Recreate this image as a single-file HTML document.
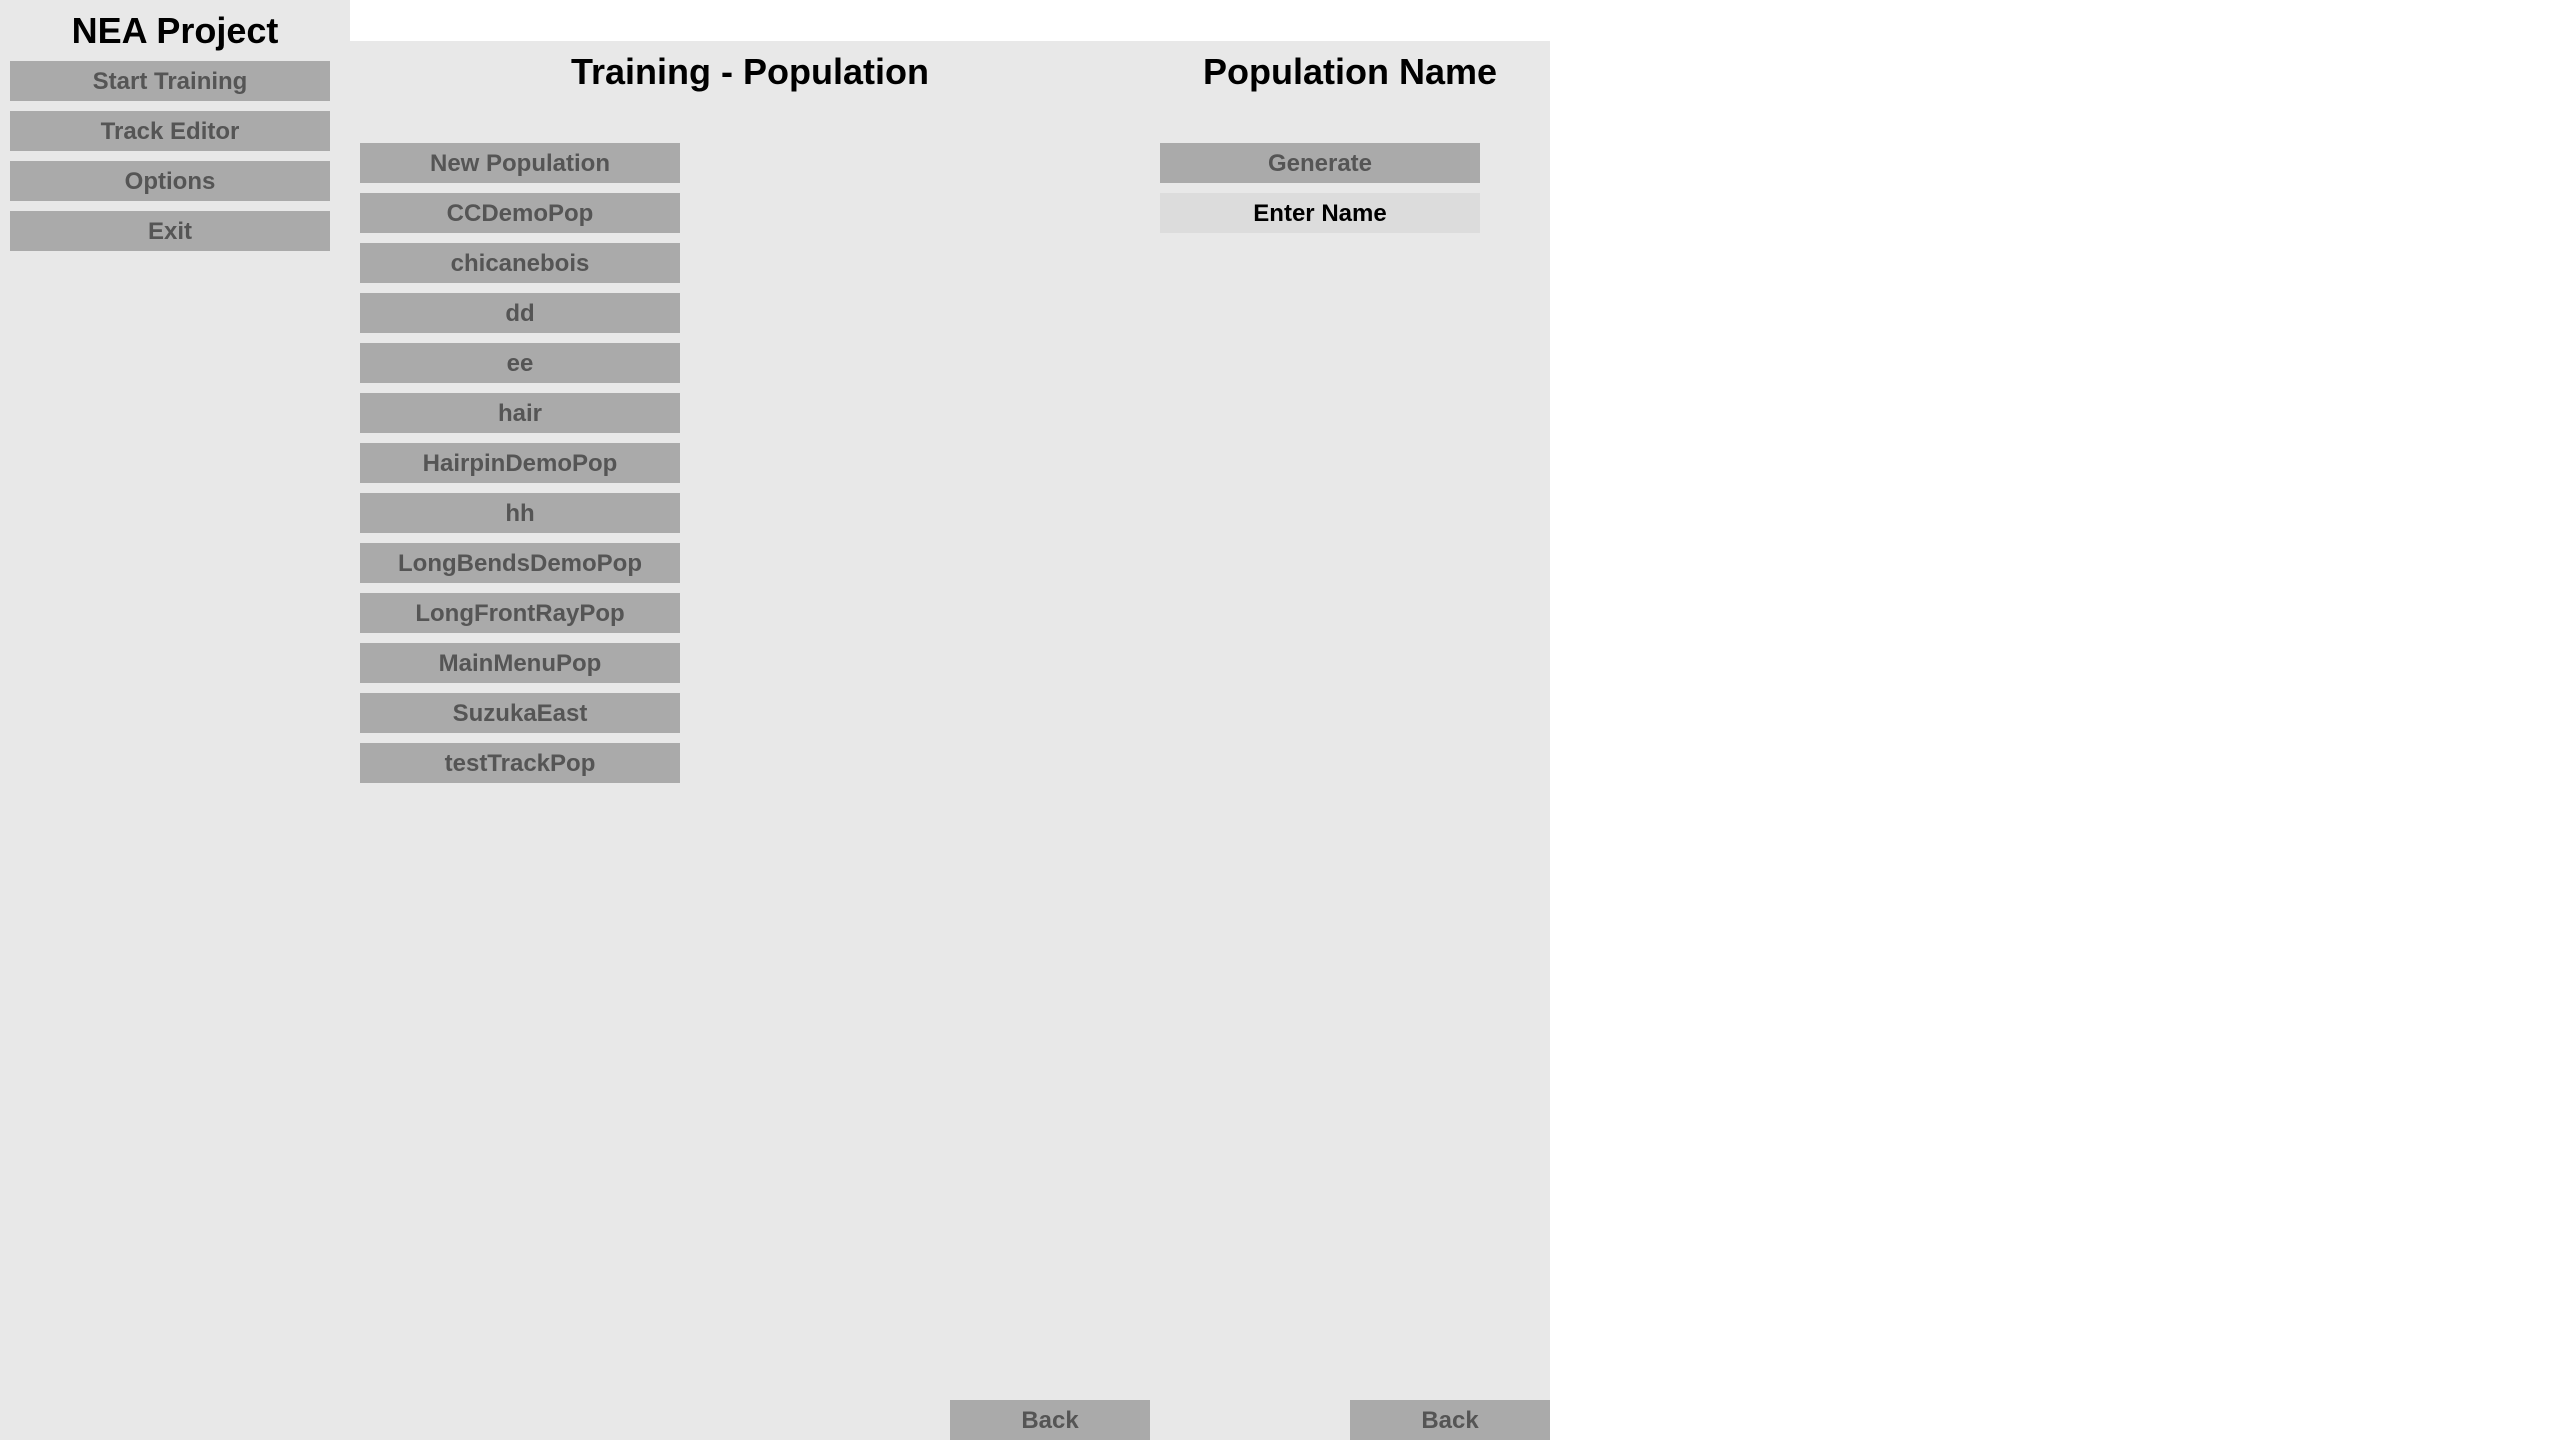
<!DOCTYPE html>
<html><head><meta charset="utf-8"><style>
body{margin:0;width:2560px;height:1440px;background:#fff;position:relative;overflow:hidden;font-family:"Liberation Sans",Arial,sans-serif;}
.sb{position:absolute;left:0;top:0;width:350px;height:1440px;background:#e8e8e8;}
.pn{position:absolute;left:349px;top:41px;width:1201px;height:1399px;background:#e8e8e8;}
.t{position:absolute;font-weight:bold;font-size:36px;color:#000;text-align:center;white-space:nowrap;transform:translateX(-50%);}
.b{position:absolute;width:320px;height:40px;background:#aaaaaa;color:#555;font-weight:bold;font-size:24px;line-height:42px;text-align:center;overflow:hidden;}
</style></head><body>
<div class="sb"></div><div class="pn"></div>
<div class="t" style="left:175px;top:10px">NEA Project</div>
<div class="b" style="left:10px;top:61px">Start Training</div>
<div class="b" style="left:10px;top:111px">Track Editor</div>
<div class="b" style="left:10px;top:161px">Options</div>
<div class="b" style="left:10px;top:211px">Exit</div>
<div class="t" style="left:750px;top:51px">Training - Population</div>
<div class="t" style="left:1350px;top:51px">Population Name</div>
<div class="b" style="left:360px;top:143px">New Population</div>
<div class="b" style="left:360px;top:193px">CCDemoPop</div>
<div class="b" style="left:360px;top:243px">chicanebois</div>
<div class="b" style="left:360px;top:293px">dd</div>
<div class="b" style="left:360px;top:343px">ee</div>
<div class="b" style="left:360px;top:393px">hair</div>
<div class="b" style="left:360px;top:443px">HairpinDemoPop</div>
<div class="b" style="left:360px;top:493px">hh</div>
<div class="b" style="left:360px;top:543px">LongBendsDemoPop</div>
<div class="b" style="left:360px;top:593px">LongFrontRayPop</div>
<div class="b" style="left:360px;top:643px">MainMenuPop</div>
<div class="b" style="left:360px;top:693px">SuzukaEast</div>
<div class="b" style="left:360px;top:743px">testTrackPop</div>
<div class="b" style="left:1160px;top:143px">Generate</div>
<div class="b" style="left:1160px;top:193px;background:#dcdcdc;color:#000">Enter Name</div>
<div class="b" style="left:950px;top:1400px;width:200px">Back</div>
<div class="b" style="left:1350px;top:1400px;width:200px">Back</div>
</body></html>
